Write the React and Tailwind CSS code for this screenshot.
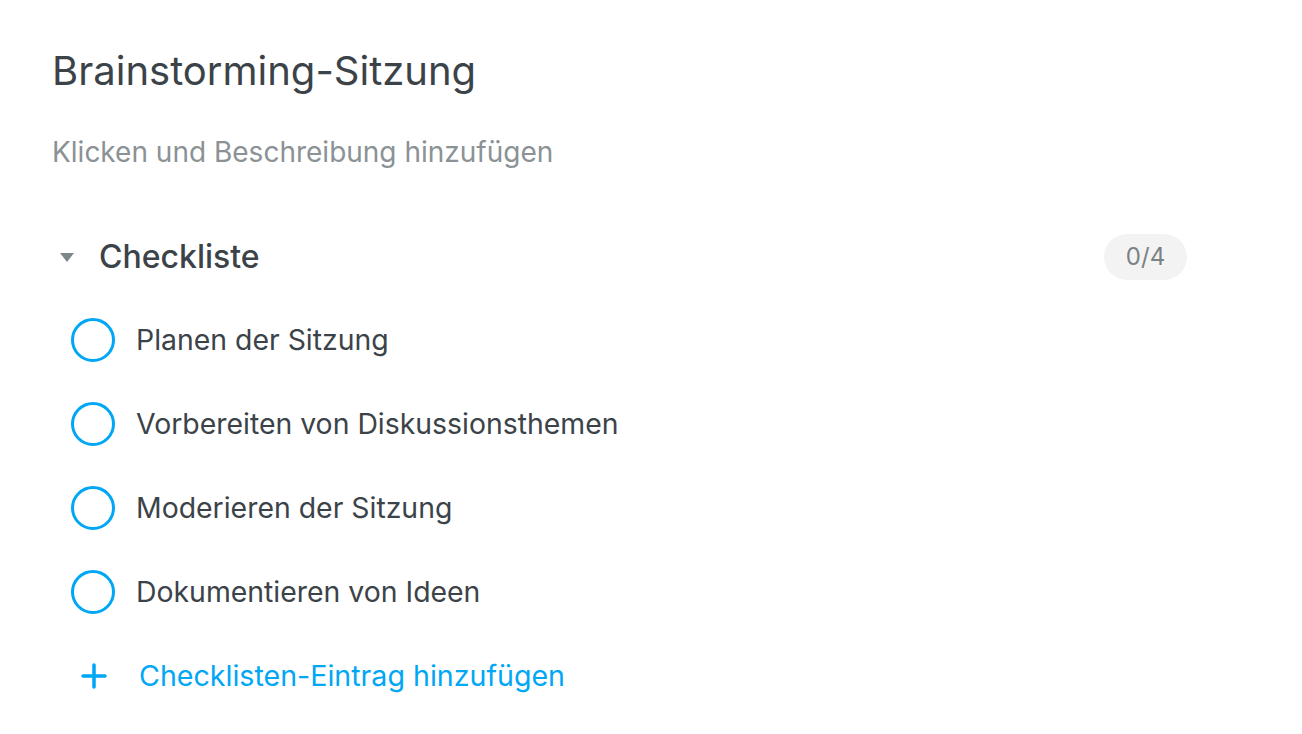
export default function App() {
  const items = [
    "Planen der Sitzung",
    "Vorbereiten von Diskussionsthemen",
    "Moderieren der Sitzung",
    "Dokumentieren von Ideen",
  ];
  return (
    <div className="w-[1302px] h-[734px] bg-white text-[#3b4349]" style={{ fontFamily: "Inter, 'Noto Sans', sans-serif" }}>
      <div className="pl-[52px] pr-[115px] pt-[45px]">
        <h1 className="text-[40px] leading-[52px] font-normal">Brainstorming-Sitzung</h1>
        <p className="mt-[38px] text-[28px] leading-[34px] text-[#8b9295]">Klicken und Beschreibung hinzufügen</p>
        <div className="mt-[64px] flex items-center justify-between h-[48px]">
          <div className="flex items-center">
            <svg width="16" height="12" viewBox="0 0 16 12" className="ml-[7px]">
              <path d="M1 2 L15 2 L8 11 Z" fill="#7e8689" />
            </svg>
            <span className="ml-[24px] text-[32px] font-medium">Checkliste</span>
          </div>
          <div className="h-[46px] w-[83px] rounded-full bg-[#f3f3f3] flex items-center justify-center text-[24px] text-[#7b8285]">0/4</div>
        </div>
        <div className="mt-[17px] flex flex-col">
          {items.map((t) => (
            <div key={t} className="h-[84px] flex items-center">
              <div className="ml-[19px] w-[44px] h-[44px] rounded-full border-[3px] border-[#00a7f5]" />
              <span className="ml-[21px] text-[28.4px]">{t}</span>
            </div>
          ))}
          <div className="h-[84px] flex items-center">
            <svg width="26" height="26" viewBox="0 0 26 26" className="ml-[29px]">
              <path d="M13 2 V24 M2 13 H24" stroke="#00a7f5" strokeWidth="3.5" strokeLinecap="round" />
            </svg>
            <span className="ml-[32px] text-[28.6px] text-[#00a7f5]">Checklisten-Eintrag hinzufügen</span>
          </div>
        </div>
      </div>
    </div>
  );
}
